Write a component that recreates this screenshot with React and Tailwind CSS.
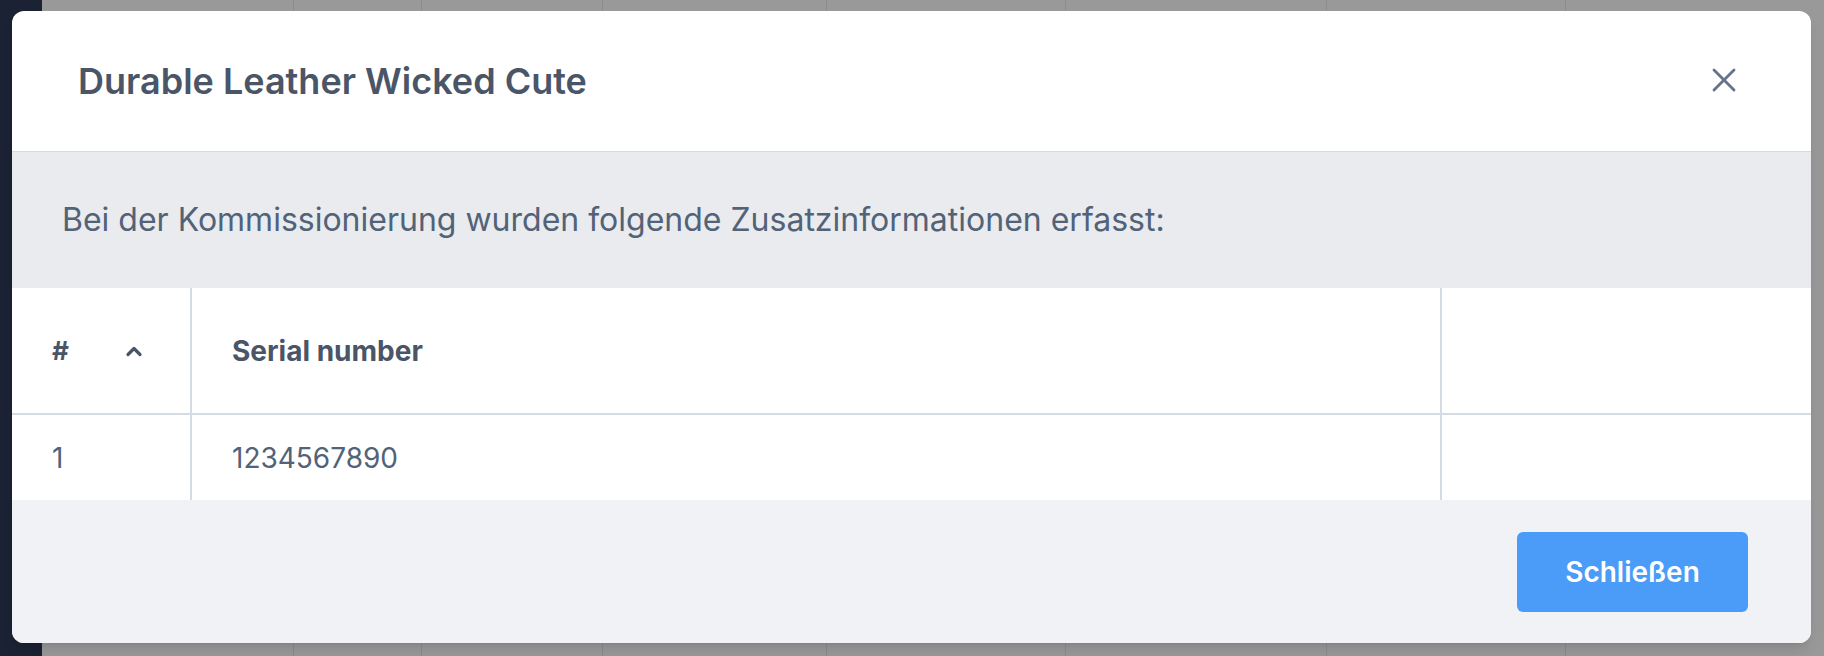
import { X } from "lucide-react";

// page behind the dialog, dimmed by the overlay
function Backdrop() {
  const cols = [252, 128, 181, 224, 239, 261, 239, 300];
  return (
    <div className="fixed inset-0 flex bg-[#999999]">
      <div className="w-[42px] shrink-0 bg-[#1b2234]" />
      <div className="flex-1 flex">
        {cols.map((w, i) => (
          <div key={i} style={{ width: w }} className="h-full border-r border-[#8c8c8c]" />
        ))}
      </div>
    </div>
  );
}

export default function App() {
  return (
    <div className="relative h-[656px] w-full overflow-hidden" style={{ fontFamily: "Inter, 'Noto Sans', sans-serif" }}>
      <Backdrop />

      <div className="fixed inset-0 pl-3 pr-[13px] pt-[11px] pb-[13px] flex">
        <div className="flex-1 flex flex-col bg-white rounded-xl overflow-hidden shadow-lg">
          {/* Header */}
          <div className="h-[141px] shrink-0 flex items-center justify-between pl-[66px] pr-[67px] border-b border-[#d5dbe2]">
            <h2 className="text-[36px] font-semibold text-[#4a5568]">Durable Leather Wicked Cute</h2>
            <button className="text-[#64748b] -mt-[2px]">
              <X className="w-[40px] h-[40px]" strokeWidth={1.7} />
            </button>
          </div>

          {/* Info band */}
          <div className="h-[136px] shrink-0 flex items-center px-[50px] bg-[#e9ebef]">
            <p className="text-[32px] text-[#526277]">
              Bei der Kommissionierung wurden folgende Zusatzinformationen erfasst:
            </p>
          </div>

          {/* Table */}
          <div className="shrink-0 bg-white">
            <div className="flex h-[127px] border-b-2 border-[#d5dbe2]">
              <div className="w-[180px] shrink-0 border-r-2 border-[#d5dbe2] flex items-center pl-10 pr-[47px] justify-between">
                <span className="text-[26px] font-bold text-[#4a5568]">#</span>
                <svg width="18" height="12" viewBox="0 0 18 12" className="text-[#4a5568]">
                  <path d="M3 9.5 L9 3.5 L15 9.5" fill="none" stroke="currentColor" strokeWidth="3.2" strokeLinecap="round" strokeLinejoin="round" />
                </svg>
              </div>
              <div className="w-[1250px] shrink-0 border-r-2 border-[#d5dbe2] flex items-center pl-[40px]">
                <span className="text-[28px] font-bold text-[#4a5568]">Serial number</span>
              </div>
              <div className="flex-1" />
            </div>
            <div className="flex h-[85px]">
              <div className="w-[180px] shrink-0 border-r-2 border-[#d5dbe2] flex items-center pl-10">
                <span className="text-[28px] text-[#526277]">1</span>
              </div>
              <div className="w-[1250px] shrink-0 border-r-2 border-[#d5dbe2] flex items-center pl-[40px]">
                <span className="text-[28px] text-[#526277]">1234567890</span>
              </div>
              <div className="flex-1" />
            </div>
          </div>

          {/* Footer */}
          <div className="flex-1 flex items-center justify-end pr-[63px] bg-[#f0f2f5]">
            <button className="w-[231px] h-[80px] rounded-md bg-[#4b9cf8] text-white text-[28px] font-semibold">
              Schließen
            </button>
          </div>
        </div>
      </div>
    </div>
  );
}
